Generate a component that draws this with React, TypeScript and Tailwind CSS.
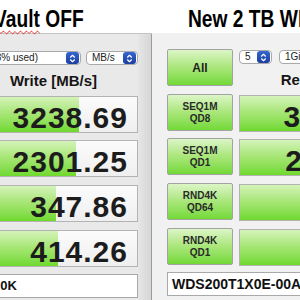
import React from "react";

const Stepper = () => (
  <div className="flex h-[12px] w-[13px] shrink-0 items-center justify-center rounded-[3px] bg-linear-to-b from-[#3566d0] to-[#1c3f9e]">
    <svg width="7" height="9" viewBox="0 0 7 9" fill="none" stroke="white" strokeWidth="1.2" strokeLinecap="round" strokeLinejoin="round">
      <path d="M1.5 3.2 L3.5 1.3 L5.5 3.2" />
      <path d="M1.5 5.8 L3.5 7.7 L5.5 5.8" />
    </svg>
  </div>
);

const Select = ({ text, className }: { text: React.ReactNode; className: string }) => (
  <div className={`flex h-[14px] items-center rounded-[4px] border border-[#a9a9a9] bg-white pl-[5px] pr-[1px] text-[10px] leading-none text-[#222] ${className}`}>
    <div className="flex-1 overflow-hidden whitespace-nowrap">{text}</div>
    <Stepper />
  </div>
);

const ValueBox = ({ value, bar, mt }: { value: string; bar: number; mt: string }) => (
  <div className={`relative h-[37px] overflow-hidden border border-[#b3b3b3] bg-linear-to-b from-[#fbfbfb] to-[#efefef] ${mt}`}>
    <div
      className="absolute inset-y-0 left-0 bg-linear-to-b from-[#d4f3b8] via-[#a4e571] to-[#6fd92b]"
      style={{ width: bar }}
    />
    <div className="relative flex h-full items-start justify-end pr-[9px] pt-[6px] text-[30px] font-bold leading-[30px] tracking-[1px] text-[#1c1c1c]">
      {value}
    </div>
  </div>
);

const Label = ({ top, bottom, mt }: { top: string; bottom?: string; mt: string }) => (
  <div className={`flex h-[37px] flex-col items-center justify-center rounded-[2px] border border-[#a3a3a3] bg-linear-to-b from-[#dcf5c6] via-[#a9e679] to-[#72d934] text-[10px] font-bold leading-[12px] text-[#2a2a2a] ${mt}`}>
    <span>{top}</span>
    {bottom && <span>{bottom}</span>}
  </div>
);

const left = [
  { value: "3238.69", bar: 109, mt: "mt-[6px]" },
  { value: "2301.25", bar: 106, mt: "mt-[7px]" },
  { value: "347.86", bar: 86, mt: "mt-[8px]" },
  { value: "414.26", bar: 88, mt: "mt-[8px]" },
];

const right = [
  { value: "3587.40", bar: 112, mt: "mt-[6px]" },
  { value: "2118.63", bar: 105, mt: "mt-[7px]" },
  { value: "612.35", bar: 92, mt: "mt-[8px]" },
  { value: "80.47", bar: 70, mt: "mt-[8px]" },
];

const labels = [
  { top: "SEQ1M", bottom: "QD8", mt: "mt-[8px]" },
  { top: "SEQ1M", bottom: "QD1", mt: "mt-[7px]" },
  { top: "RND4K", bottom: "QD64", mt: "mt-[8px]" },
  { top: "RND4K", bottom: "QD1", mt: "mt-[8px]" },
];

export default function App() {
  return (
    <div className="flex h-[300px] w-[300px] flex-col overflow-hidden bg-white font-['Liberation_Sans',Arial,sans-serif]">
      {/* titles */}
      <div className="flex h-[33px] shrink-0">
        <div className="w-[152px] shrink-0 pt-[7px]">
          <span className="ml-[-6px] inline-block origin-left scale-x-[0.8] whitespace-nowrap text-[24px] font-bold leading-[24px] text-black">
            <span className="underline decoration-[#e0201c] decoration-wavy decoration-1 underline-offset-[3px]">Vault</span> OFF
          </span>
        </div>
        <div className="flex-1 overflow-hidden pl-[36px] pt-[7px]">
          <span className="inline-block origin-left scale-x-[0.8] whitespace-nowrap text-[24px] font-bold leading-[24px] text-black">
            New 2 TB WD_BLACK SN850X
          </span>
        </div>
      </div>

      <div className="flex flex-1">
        {/* left window */}
        <div className="flex w-[152px] shrink-0 overflow-hidden border-t border-[#c4c4c4] bg-[#e9e9e9]">
          <div className="ml-[-31px] flex w-[169px] shrink-0 flex-col">
            <div className="mt-[17px] flex gap-[5px]">
              <Select
                className="w-[112px]"
                text={<div className="flex w-[63px] justify-end">Macintosh HD (8% used)</div>}
              />
              <Select className="w-[52px]" text="MB/s" />
            </div>
            <div className="mt-[7px] h-[18px] text-center text-[15px] font-bold leading-[18px] text-[#151515]">
              Write [MB/s]
            </div>
            {left.map((r) => (
              <ValueBox key={r.value} {...r} />
            ))}
            <div className="mt-[7px] flex h-[24px] items-center border border-[#a9a9a9] bg-white pl-[4px] text-[13px] font-bold text-[#111]">
              <div className="flex w-[43px] justify-end overflow-hidden whitespace-nowrap">Extreme 0K</div>
            </div>
          </div>
          <div className="flex-1 border-r border-[#9c9c9c] bg-linear-to-r from-[#e6e6e6] to-[#d6d6d6]" />
        </div>

        {/* right window */}
        <div className="flex flex-1 flex-col overflow-hidden bg-[#f1f1f1] pl-[15px]">
          <div className="flex gap-[6px]">
            <div className="flex w-[66px] shrink-0 flex-col">
              <div className="mt-[16px] flex h-[37px] items-center justify-center rounded-[2px] border border-[#a3a3a3] bg-linear-to-b from-[#dcf5c6] via-[#a9e679] to-[#72d934] text-[12px] font-bold text-[#1e1e1e]">
                All
              </div>
              {labels.map((l, i) => (
                <Label key={i} {...l} />
              ))}
            </div>
            <div className="flex w-[170px] shrink-0 flex-col">
              <div className="mt-[17px] flex gap-[7px]">
                <Select className="w-[33px]" text="5" />
                <Select className="w-[62px]" text="1GiB" />
              </div>
              <div className="mt-[7px] h-[18px] text-center text-[15px] font-bold leading-[18px] text-[#151515]">
                Read [MB/s]
              </div>
              {right.map((r) => (
                <ValueBox key={r.value} {...r} />
              ))}
            </div>
          </div>
          <div className="mt-[6px] flex h-[24px] w-[200px] shrink-0 items-center whitespace-nowrap border border-[#a9a9a9] bg-white pl-[4px] text-[14px] font-bold text-[#111]">
            WDS200T1X0E-00AFY0
          </div>
        </div>
      </div>
    </div>
  );
}
